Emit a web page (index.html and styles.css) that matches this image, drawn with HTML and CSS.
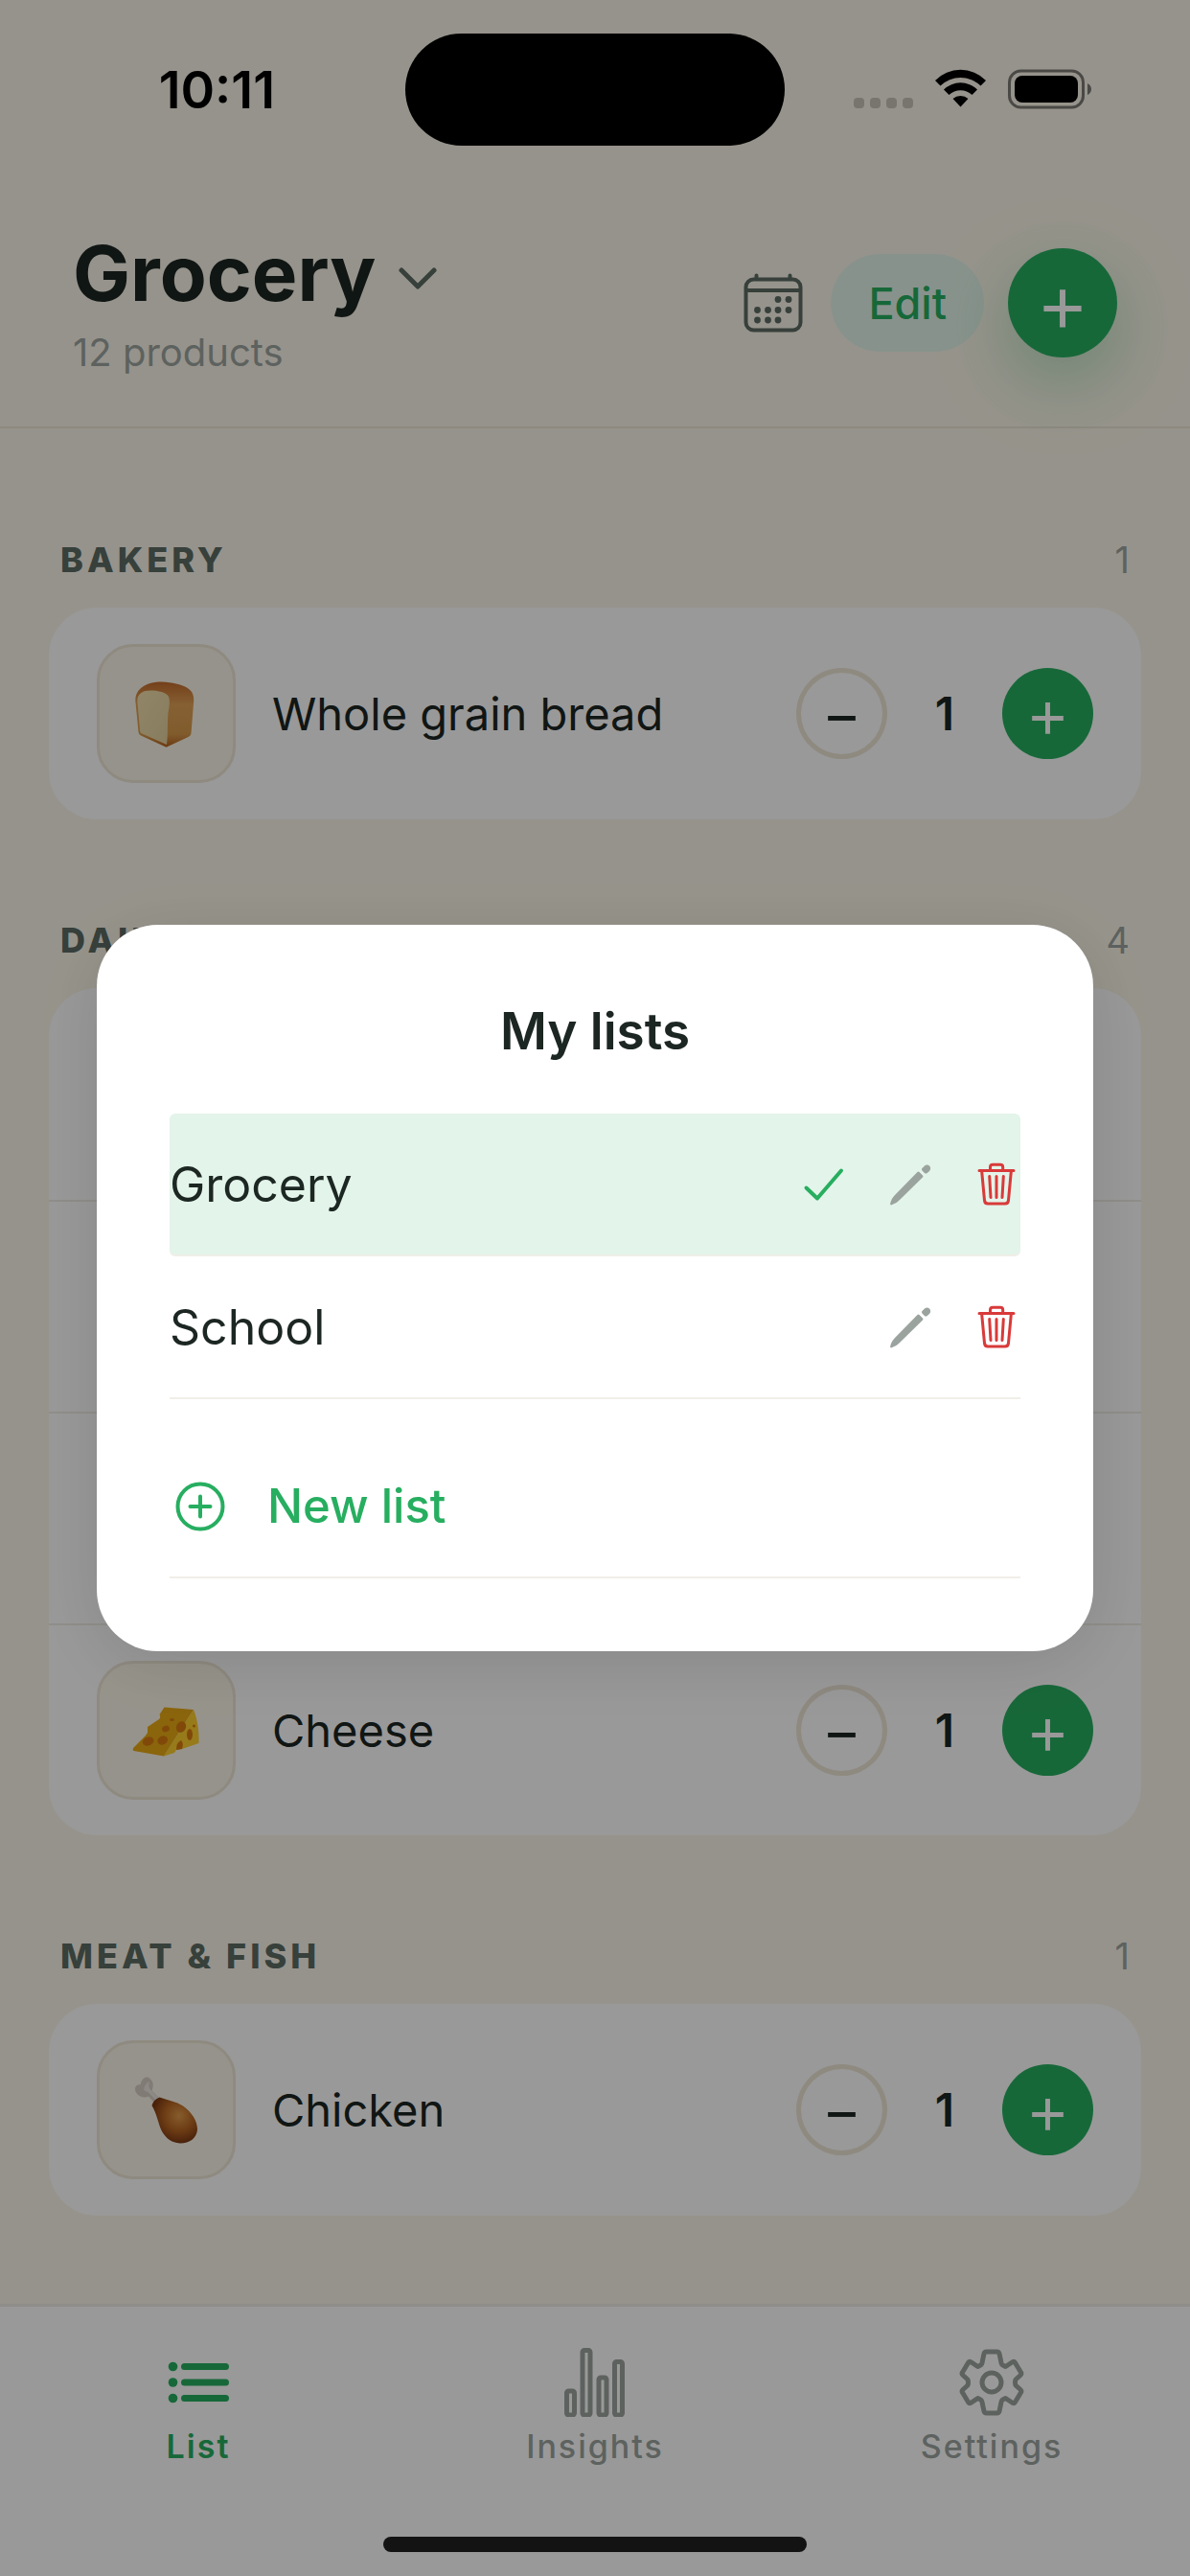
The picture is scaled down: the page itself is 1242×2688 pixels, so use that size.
FILE: index.html
```html
<!DOCTYPE html>
<html lang="en">
<head>
    <meta charset="UTF-8">
    <meta name="viewport" content="width=device-width, initial-scale=1.0">
    <title>Grocery</title>
    <link rel="stylesheet" href="styles.css">
</head>
<body>
    <!-- shared icons -->
    <svg class="sprite" aria-hidden="true">
        <symbol id="pencil" viewBox="0 0 52 52">
            <path d="M6 46.500C7 42 8.500 39.500 11 37L34.500 13Q35.500 12 36.500 13L40 16.500Q41 17.500 40 18.500L16 42C13.500 44.500 11 46 7 47.500Z"/>
            <path d="M39.500 9L42 6.500C43.500 5 45.500 5 47 6.500C48.500 8 48.500 10.500 47 12L44.500 14.200C43.500 14.800 42.500 14.600 41.900 14L39.500 11.500C38.800 10.700 38.800 9.700 39.500 9Z"/>
        </symbol>
        <symbol id="trash" viewBox="0 0 52 52">
            <path d="M9 11.500H45M11.700 12.500L14.500 42.500Q14.800 46 18 46H36Q39.200 46 39.500 42.500L42.300 12.500M20.500 11V8Q20.500 5.300 23.200 5.300H31Q33.700 5.300 33.700 8V11M19.700 17.500L21 39.500M27 17.500V39.500M34.300 17.500L33 39.500"/>
        </symbol>
        <symbol id="minus" viewBox="0 0 96 96">
            <path d="M33.500 53H62.500"/>
        </symbol>
        <symbol id="plus" viewBox="0 0 96 96">
            <path d="M31.500 53H64.500M48 36.500V69.500"/>
        </symbol>
    </svg>

    <div class="page">
        <div class="status">
            <span class="time">10:11</span>
            <span class="island"></span>
            <svg class="signals" width="250" height="46" viewBox="0 0 250 46">
                <g fill="#000" opacity=".2">
                    <rect x="0" y="32" width="11" height="11" rx="4"/>
                    <rect x="17" y="32" width="11" height="11" rx="4"/>
                    <rect x="34" y="32" width="11" height="11" rx="4"/>
                    <rect x="51" y="32" width="11" height="11" rx="4"/>
                </g>
                <path d="M85 14A37 37 0 0 1 138 14L132.500 19.500A30 30 0 0 0 90.500 19.500ZM94 23.500A25 25 0 0 1 129 23.500L123.500 29A17.500 17.500 0 0 0 99.500 29ZM103.500 33A12 12 0 0 1 119.500 33L111.500 41.500Z"/>
                <rect x="162.500" y="4" width="77" height="38" rx="12" fill="none" stroke="#000" stroke-opacity=".5" stroke-width="3"/>
                <rect x="168" y="9" width="66" height="28" rx="8"/>
                <path d="M244 17Q248 19 248 23Q248 27 244 29Z" opacity=".5"/>
            </svg>
        </div>

        <header class="header">
            <div class="heading">
                <h1><button class="switch" type="button">Grocery
                    <svg width="40" height="26" viewBox="0 0 40 26"><path d="M3 4L20 21L37 4"/></svg>
                </button></h1>
                <p>12 products</p>
            </div>
            <div class="actions">
                <button class="calendar" type="button" aria-label="Calendar">
                    <svg width="62" height="62" viewBox="0 0 62 62">
                        <rect x="2.500" y="6.500" width="57" height="53" rx="8"/>
                        <path d="M3 18H59M13.500 2.500V6M48.500 2.500V6"/>
                        <g class="dots">
                            <circle cx="36" cy="27.500" r="3.400"/><circle cx="47" cy="27.500" r="3.400"/>
                            <circle cx="14.500" cy="38.500" r="3.400"/><circle cx="25.500" cy="38.500" r="3.400"/><circle cx="36" cy="38.500" r="3.400"/><circle cx="47" cy="38.500" r="3.400"/>
                            <circle cx="14.500" cy="49" r="3.400"/><circle cx="25.500" cy="49" r="3.400"/><circle cx="36" cy="49" r="3.400"/>
                        </g>
                    </svg>
                </button>
                <button class="edit" type="button">Edit</button>
                <button class="add" type="button" aria-label="Add product"><svg><use href="#plus"/></svg></button>
            </div>
        </header>

        <main class="content">
            <section>
                <div class="group"><h2>BAKERY</h2><span>1</span></div>
                <ul class="card">
                    <li class="item">
                        <span class="thumb">
                            <svg viewBox="0 0 72 72">
                                <defs>
                                    <linearGradient id="crust" x1="0" y1="0" x2="0" y2="1"><stop offset="0" stop-color="#c26a2c"/><stop offset=".35" stop-color="#dfa055"/><stop offset=".8" stop-color="#d69a4c"/><stop offset="1" stop-color="#b5601f"/></linearGradient>
                                    <linearGradient id="crumb" x1="0" y1="0" x2="1" y2="1"><stop offset="0" stop-color="#f2dfac"/><stop offset="1" stop-color="#e2cf9c"/></linearGradient>
                                </defs>
                                <path fill="url(#crust)" d="M3.500 24C2 11 13 2.500 31 2.500C42 3 51 5 57 8.500C63 12 65 17 64 25L61.500 56C61.500 58 60 59 58.500 60L37 70Q35.500 71 34 70L9 58.500Q6.500 57 6.500 54.500Z"/>
                                <path fill="url(#crumb)" d="M5.500 25C4 15 11 11.500 19 11.500C27 11.500 33 13 36.500 16C40 19 39 26 37.500 35C36.500 44 37.500 56 36 68L9 56Q8 55 8 53Z"/>
                            </svg>
                        </span>
                        <span class="name">Whole grain bread</span>
                        <button class="step less" type="button" aria-label="Less"><svg><use href="#minus"/></svg></button>
                        <span class="qty">1</span>
                        <button class="step more" type="button" aria-label="More"><svg><use href="#plus"/></svg></button>
                    </li>
                </ul>
            </section>

            <section>
                <div class="group"><h2>DAIRY</h2><span>4</span></div>
                <ul class="card">
                    <li class="item"></li>
                    <li class="item"></li>
                    <li class="item"></li>
                    <li class="item">
                        <span class="thumb">
                            <svg viewBox="0 0 72 72">
                                <path fill="#e6a815" d="M33.500 11.500L64 14L33 62.500L1.500 57Q0 56 1 54L14 41L16 38V32L28 24Q30 22 28.500 19Z"/>
                                <path fill="#fccb2c" d="M64 14C68 24 70 36 69.500 49L52 55L46 56L44 59L33 62.500Z"/>
                                <g fill="#d67a10">
                                    <ellipse cx="16.700" cy="47" rx="6" ry="4.500" transform="rotate(-20 16.700 47)"/>
                                    <ellipse cx="31.700" cy="46" rx="5.500" ry="4.500" transform="rotate(-25 31.700 46)"/>
                                    <ellipse cx="35" cy="34" rx="4" ry="3.200" transform="rotate(-20 35 34)"/>
                                    <ellipse cx="51" cy="32" rx="5" ry="6" transform="rotate(25 51 32)"/>
                                    <ellipse cx="60" cy="40" rx="3" ry="6"/>
                                    <ellipse cx="41.500" cy="24.500" rx="2.500" ry="1.500"/>
                                    <circle cx="64.500" cy="31" r="1.500"/>
                                    <path d="M46 56Q46 48 51 46Q54 49 52 55Z"/>
                                </g>
                            </svg>
                        </span>
                        <span class="name">Cheese</span>
                        <button class="step less" type="button" aria-label="Less"><svg><use href="#minus"/></svg></button>
                        <span class="qty">1</span>
                        <button class="step more" type="button" aria-label="More"><svg><use href="#plus"/></svg></button>
                    </li>
                </ul>
            </section>

            <section>
                <div class="group"><h2>MEAT &amp; FISH</h2><span>1</span></div>
                <ul class="card">
                    <li class="item">
                        <span class="thumb">
                            <svg viewBox="0 0 72 72">
                                <defs>
                                    <radialGradient id="leg" cx=".6" cy=".4" r=".6"><stop offset="0" stop-color="#e09a4a"/><stop offset=".55" stop-color="#b56422"/><stop offset="1" stop-color="#7a3813"/></radialGradient>
                                </defs>
                                <path fill="#d6cdc4" d="M24 29L17 21.500C13 24 7 22 4 17.500C1.500 13 4 8.500 8.500 9.500C10 3 14 0 18 2.500C22.500 6 22.500 11 20.500 15.500L29 24Z"/>
                                <path fill="#ebe5de" d="M12 15L17 17.500L26 27L28 24L19 14.500Q16 11 18 6Q13 8 12 15Z"/>
                                <path fill="url(#leg)" d="M28.500 22.500C37 25.500 46 27 53 31.500C62 38 68 47 68 56C67.500 65 60 70.500 50 70.500C41 70 35 65 31 58C27 50 26 40 20.500 31Q22 25 28.500 22.500Z"/>
                            </svg>
                        </span>
                        <span class="name">Chicken</span>
                        <button class="step less" type="button" aria-label="Less"><svg><use href="#minus"/></svg></button>
                        <span class="qty">1</span>
                        <button class="step more" type="button" aria-label="More"><svg><use href="#plus"/></svg></button>
                    </li>
                </ul>
            </section>
        </main>

        <nav class="tabs">
            <a class="active" href="#list">
                <svg viewBox="0 0 72 72">
                    <g fill="currentColor" stroke="none"><circle cx="9.500" cy="19.500" r="4.800"/><circle cx="9.500" cy="36" r="4.800"/><circle cx="9.500" cy="52.500" r="4.800"/></g>
                    <path class="bars" d="M21.500 19.500H64.500M21.500 36H64.500M21.500 52.500H64.500"/>
                </svg>
                List
            </a>
            <a href="#insights">
                <svg viewBox="0 0 72 72">
                    <rect x="6.500" y="45" width="8" height="25" rx="2"/>
                    <rect x="23" y="2.500" width="8" height="67.500" rx="2"/>
                    <rect x="40" y="31" width="8" height="39" rx="2"/>
                    <rect x="56.500" y="14.500" width="8" height="55.500" rx="2"/>
                </svg>
                Insights
            </a>
            <a href="#settings">
                <svg viewBox="0 0 72 72">
                    <path d="M30.500 4H41.500Q43.500 4 44 6L45.500 13Q46 17.500 47.500 18L50.500 19.500L58 14.500Q59.500 14 60.500 15.500L66.500 25.500Q67.500 27 66 28.500L61 33Q60 36 61 39L66 43.500Q67.500 45 66.500 46.500L60.500 56.500Q59.500 58 58 57.500L50.500 52.500L47.500 54Q46 54.500 45.500 59L44 66Q43.500 68 41.500 68H30.500Q28.500 68 28 66L26.500 59Q26 54.500 24.500 54L21.500 52.500L14 57.500Q12.500 58 11.500 56.500L5.500 46.500Q4.500 45 6 43.500L11 39Q12 36 11 33L6 28.500Q4.500 27 5.500 25.500L11.500 15.500Q12.500 14 14 14.500L21.500 19.500L24.500 18Q26 17.500 26.500 13L28 6Q28.500 4 30.500 4Z"/>
                    <circle cx="36" cy="36" r="10"/>
                </svg>
                Settings
            </a>
            <span class="home"></span>
        </nav>
    </div>

    <div class="overlay">
        <div class="modal" role="dialog" aria-labelledby="modal-title">
            <h2 id="modal-title">My lists</h2>
            <div class="row current">
                <button class="pick" type="button">Grocery</button>
                <svg class="check" viewBox="0 0 52 52"><path d="M8.500 29.500L20 40.500L45 11.500"/></svg>
                <button class="tool" type="button" aria-label="Rename Grocery"><svg class="pencil"><use href="#pencil"/></svg></button>
                <button class="tool" type="button" aria-label="Delete Grocery"><svg class="trash"><use href="#trash"/></svg></button>
            </div>
            <div class="row">
                <button class="pick" type="button">School</button>
                <button class="tool" type="button" aria-label="Rename School"><svg class="pencil"><use href="#pencil"/></svg></button>
                <button class="tool" type="button" aria-label="Delete School"><svg class="trash"><use href="#trash"/></svg></button>
            </div>
            <button class="row new" type="button">
                <svg viewBox="0 0 64 64"><circle cx="32" cy="32" r="23.500"/><path d="M21.500 32H42.500M32 21.500V42.500"/></svg>
                New list
            </button>
        </div>
    </div>
</body>
</html>
```
FILE: styles.css
```css
*{
    box-sizing: border-box;
}
body{
    margin: 0;
    background-color: #fbf6e9;
    color: #1c2622;
    font-family: "Inter", "Liberation Sans", sans-serif;
}
h1,h2,p,ul{
    margin: 0;
    padding: 0;
}
ul{
    list-style: none;
}
button{
    padding: 0;
    border: 0;
    background: none;
    color: inherit;
    font: inherit;
    cursor: pointer;
}
svg{
    display: block;
    flex: none;
}
.sprite{
    position: absolute;
    width: 0;
    height: 0;
}
.page{
    display: flex;
    flex-direction: column;
    min-height: 100vh;
}

/* status bar */
.status{
    display: grid;
    grid-template-columns: 1fr auto 1fr;
    align-items: center;
    height: 186px;
}
.time{
    justify-self: end;
    margin-right: 136px;
    color: #000;
    font-size: 54px;
    font-weight: 600;
}
.island{
    width: 396px;
    height: 117px;
    border-radius: 60px;
    background-color: #000;
}
.signals{
    margin-left: 72px;
}

/* header */
.header{
    display: flex;
    align-items: center;
    justify-content: space-between;
    padding: 51px 76px 50px;
    border-bottom: 2px solid #ece5d6;
}
.heading h1{
    font-size: 80px;
    font-weight: 700;
    line-height: 96px;
}
.heading p{
    margin-top: 8px;
    color: #9ba39f;
    font-size: 40px;
    line-height: 54px;
}
.switch{
    display: flex;
    align-items: center;
    gap: 24px;
}
.switch svg{
    margin-top: 12px;
    fill: none;
    stroke: #5c6b63;
    stroke-width: 5px;
    stroke-linecap: round;
    stroke-linejoin: round;
}
.actions{
    display: flex;
    align-items: center;
}
.calendar svg{
    fill: none;
    stroke: #5c6b63;
    stroke-width: 4px;
    stroke-linecap: round;
}
.calendar .dots{
    fill: #5c6b63;
    stroke: none;
}
.edit{
    height: 102px;
    margin: 0 25px 0 29px;
    padding: 0 39px;
    border-radius: 51px;
    background-color: #e3f4ea;
    color: #27ae60;
    font-size: 45px;
    font-weight: 500;
}
.add{
    width: 114px;
    height: 114px;
    border-radius: 50%;
    background-color: #27ae60;
    box-shadow: 0 25px 75px rgba(39, 174, 96, .35);
}
.add svg{
    width: 114px;
    height: 114px;
    stroke: #fff;
    stroke-width: 5px;
}

/* product list */
.content{
    flex: 1;
    padding: 115px 51px 90px;
}
.content section + section{
    margin-top: 104px;
}
.group{
    display: flex;
    justify-content: space-between;
    margin-bottom: 28px;
    padding: 0 12px;
    line-height: 44px;
}
.group h2{
    color: #5c6b63;
    font-size: 36px;
    font-weight: 800;
    letter-spacing: 4px;
}
.group span{
    color: #9ba39f;
    font-size: 38px;
}
.card{
    border-radius: 50px;
    background-color: #fff;
}
.item{
    display: flex;
    align-items: center;
    min-height: 221px;
    padding: 0 50px;
}
.item + .item{
    border-top: 2px solid #f0ede6;
}
.thumb{
    display: flex;
    align-items: center;
    justify-content: center;
    width: 145px;
    height: 145px;
    border: 3px solid #eee6d6;
    border-radius: 38px;
    background-color: #fbf6e9;
}
.thumb svg{
    width: 72px;
    height: 72px;
}
.name{
    flex: 1;
    margin-left: 38px;
    font-size: 47px;
    font-weight: 400;
}
.step{
    width: 95px;
    height: 95px;
    border-radius: 50%;
}
.step svg{
    width: 95px;
    height: 95px;
    stroke-width: 5px;
}
.less{
    box-shadow: inset 0 0 0 5px #eee6d6;
    stroke: #1c2622;
}
.more{
    background-color: #27ae60;
    stroke: #fff;
}
.qty{
    width: 120px;
    font-size: 48px;
    font-weight: 600;
    text-align: center;
}

/* bottom tabs */
.tabs{
    position: relative;
    display: flex;
    height: 284px;
    border-top: 3px solid #eeece6;
    background-color: #fff;
}
.tabs a{
    display: flex;
    flex: 1;
    flex-direction: column;
    align-items: center;
    gap: 10px;
    padding-top: 43px;
    color: #9ba39f;
    font-size: 34px;
    font-weight: 500;
    letter-spacing: 2px;
    line-height: 42px;
    text-decoration: none;
}
.tabs .active{
    color: #27ae60;
    font-weight: 600;
}
.tabs svg{
    width: 72px;
    height: 72px;
    fill: none;
    stroke: currentColor;
    stroke-width: 5px;
    stroke-linecap: round;
    stroke-linejoin: round;
}
.tabs .bars{
    stroke-width: 7px;
}
.home{
    position: absolute;
    bottom: 25px;
    left: 50%;
    width: 442px;
    height: 16px;
    border-radius: 8px;
    background-color: #202020;
    transform: translateX(-50%);
}

/* list picker */
.overlay{
    position: fixed;
    inset: 0;
    display: flex;
    align-items: center;
    padding: 0 101px;
    background-color: rgba(0, 0, 0, .4);
}
.modal{
    width: 100%;
    padding: 76px;
    border-radius: 64px;
    background-color: #fff;
    box-shadow: 0 12px 75px rgba(0, 0, 0, .12);
}
.modal h2{
    margin-bottom: 51px;
    font-size: 53px;
    font-weight: 600;
    line-height: 70px;
    text-align: center;
}
.row{
    display: flex;
    align-items: center;
    gap: 38px;
    width: 100%;
    height: 149px;
    border-bottom: 2px solid #f0eee8;
    font-size: 50px;
    font-weight: 400;
}
.row svg{
    width: 52px;
    height: 52px;
}
.current{
    border-radius: 6px;
    background-color: #e3f4ea;
}
.pick{
    flex: 1;
    text-align: left;
}
.check,.trash,.new svg{
    fill: none;
    stroke: #27ae60;
    stroke-width: 4px;
    stroke-linecap: round;
    stroke-linejoin: round;
}
.trash{
    stroke: #d93a3a;
    stroke-width: 3px;
}
.pencil{
    fill: #9ba39f;
}
.new{
    margin-top: 38px;
    color: #27ae60;
    font-size: 49px;
    font-weight: 500;
}
.new svg{
    width: 64px;
    height: 64px;
}
```
